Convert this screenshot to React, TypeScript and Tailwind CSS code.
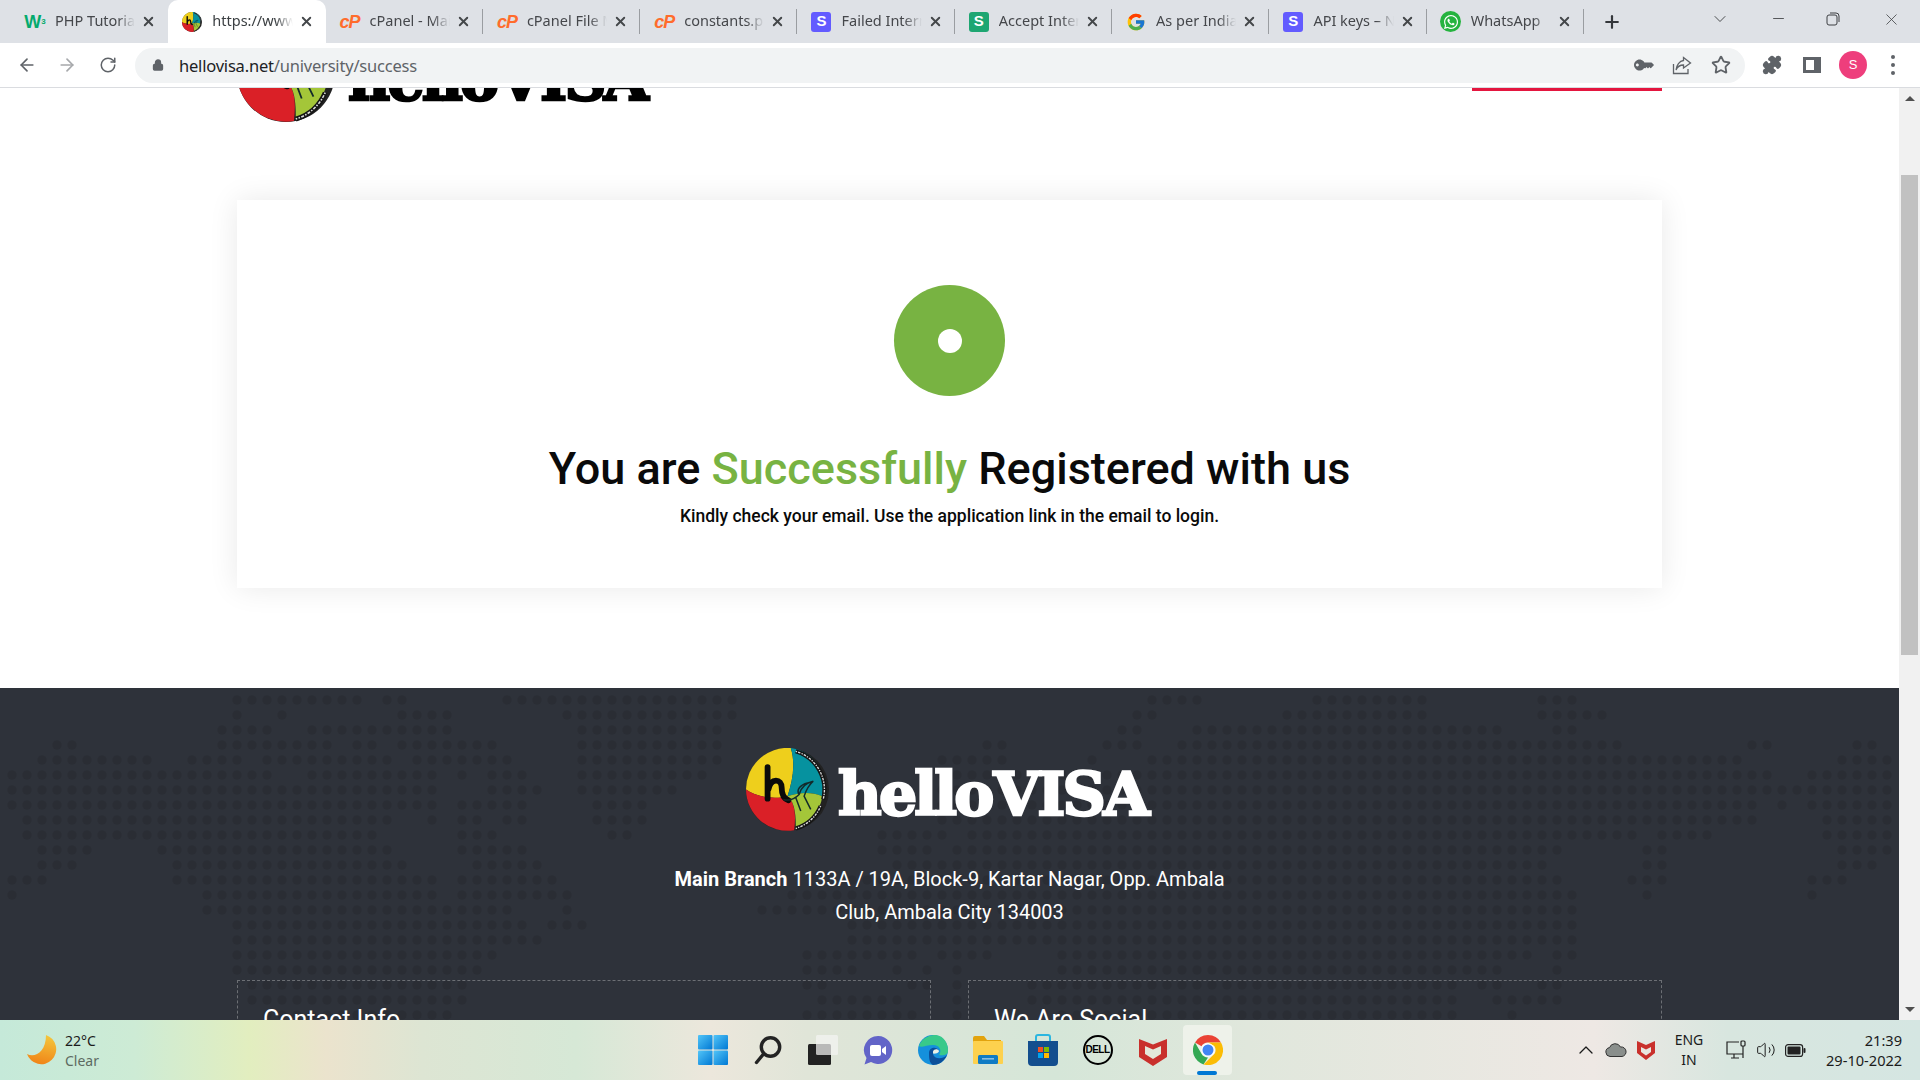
import React from "react";
import { ArrowLeft, ArrowRight, RotateCw, Lock, Star, X, Plus, ChevronDown, ChevronUp, Minus, Volume2, Puzzle } from "lucide-react";
import { FcGoogle } from "react-icons/fc";
import { FaWhatsapp, FaKey } from "react-icons/fa";

type Span = [number, number];
const rows: Span[][] = [
  [[15,23],[25,26],[33,48],[76,79],[87,94],[102,104]],
  [[15,15],[18,18],[26,29],[37,48],[75,76],[85,94],[102,106]],
  [[14,17],[20,29],[38,47],[74,75],[79,99],[103,104]],
  [[3,4],[14,21],[23,24],[26,32],[38,47],[65,66],[73,75],[78,107],[116,117],[123,124]],
  [[2,9],[12,15],[17,25],[27,33],[38,47],[62,66],[72,72],[76,115],[122,125]],
  [[0,17],[20,28],[30,30],[32,34],[38,46],[62,117],[120,125]],
  [[0,28],[32,35],[38,44],[62,119],[120,125]],
  [[0,28],[30,34],[39,42],[62,116],[118,118],[120,125]],
  [[1,25],[28,28],[30,31],[33,34],[39,42],[62,116],[121,125]],
  [[1,24],[30,32],[40,41],[58,62],[64,108],[110,113],[121,125]],
  [[2,5],[10,25],[30,34],[58,61],[63,103],[109,110],[122,125]],
  [[2,4],[11,26],[31,35],[59,102],[109,110],[122,124]],
  [[0,2],[11,28],[30,36],[56,103],[108,110],[120,122]],
  [[0,0],[13,28],[30,37],[52,104],[109,109],[120,120]],
  [[13,33],[37,37],[50,104]],
  [[15,34],[36,38],[56,104]],
  [[15,35],[56,104]],
  [[15,32],[53,60],[62,65],[70,101],[103,104]],
  [[15,31],[53,56],[59,59],[61,61],[63,63],[70,99],[103,103]],
  [[16,30],[53,54],[60,61],[63,63],[68,96],[98,99],[102,103]],
  [[16,30],[54,59],[63,63],[68,96],[99,103]],
  [[17,29],[53,60],[63,63],[70,96],[100,100]],
];

function WorldDots() {
  const dots: React.ReactElement[] = [];
  rows.forEach((spans, r) =>
    spans.forEach(([a, b]) => {
      for (let c = a; c <= b; c++) {
        dots.push(<circle key={`${r}-${c}`} cx={12 + 15 * c} cy={12 + 15 * r} r={4.5} fill="#2a2d34" />);
      }
    })
  );
  return (
    <svg className="absolute left-0 top-0 h-[340px] w-[1899px]" viewBox="0 0 1899 340">
      {dots}
    </svg>
  );
}

function LogoMark({ size }: { size: number }) {
  return (
    <svg width={size} height={size} viewBox="0 0 100 100" className="shrink-0">
      <circle cx="50" cy="50" r="50" fill="#222" />
      <path d="M0 50A50 50 0 0 1 54 0C60 20 56 40 50 58C36 62 14 60 0 50Z" fill="#eecf1c" />
      <path d="M54 0C76 3 92 20 93 40L92 58C78 52 62 54 50 58C56 40 60 20 54 0Z" fill="#06929f" />
      <path d="M0 50C14 60 36 62 50 58C60 66 60 84 58 99A50 50 0 0 1 0 50Z" fill="#da2027" />
      <path d="M50 58C62 54 78 52 92 58A49 49 0 0 1 60 97C60 84 60 66 50 58Z" fill="#a4c639" />
      <path d="M26 23V61M27 50C30 35 43 37 43 48C43 56 45 61 51 63" fill="none" stroke="#0a0a0a" strokeWidth="7" strokeLinecap="round" />
      <path d="M45 62C52 64 58 62 64 56C66 48 72 42 81 40C74 46 72 52 70 58L78 74M60 60L66 76M64 56C60 50 66 44 74 42" fill="none" stroke="#132a2a" strokeWidth="1.8" />
      <path d="M60 4A48 48 0 0 1 93 62" fill="none" stroke="#151515" strokeWidth="5" />
      <path d="M60 4A48 48 0 0 1 93 62" fill="none" stroke="#ddd" strokeWidth="1.6" strokeDasharray="1.6 1.4 3 1.4" />
      <path d="M90 70A48 48 0 0 1 60 97" fill="none" stroke="#151515" strokeWidth="5" />
      <path d="M90 70A48 48 0 0 1 60 97" fill="none" stroke="#ddd" strokeWidth="1.6" strokeDasharray="1.6 1.4 3 1.4" />
    </svg>
  );
}

function Stripe({ bg }: { bg: string }) {
  return (
    <span className={`flex h-[20px] w-[20px] items-center justify-center rounded-[3px] font-['Liberation_Sans'] text-[15px] font-bold text-white ${bg}`}>
      S
    </span>
  );
}
const CP = () => <span className="font-['Liberation_Sans'] text-[18px] font-bold italic leading-none tracking-[-1px] text-[#ff6c2c]">cP</span>;

const Whats = () => (
  <span className="flex h-[21px] w-[21px] items-center justify-center rounded-full bg-[#25b33f]">
    <FaWhatsapp size={16} className="text-white" />
  </span>
);

const tabs: { t: string; icon: React.ReactNode; active?: boolean; sep?: boolean }[] = [
  { t: "PHP Tutorial", icon: <span className="font-['Liberation_Sans'] text-[18px] font-bold leading-none text-[#04aa6d]">W<sup className="text-[8px]">3</sup></span> },
  { t: "https://www.hellovisa", active: true, icon: <LogoMark size={20} /> },
  { t: "cPanel - Main", icon: <CP /> , sep: true },
  { t: "cPanel File Manager", sep: true, icon: <CP /> },
  { t: "constants.php", sep: true, icon: <CP /> },
  { t: "Failed Internal", sep: true, icon: <Stripe bg="bg-[#635bff]" /> },
  { t: "Accept Internal", sep: true, icon: <Stripe bg="bg-[#1ea672]" /> },
  { t: "As per Indian", sep: true, icon: <FcGoogle size={20} /> },
  { t: "API keys – Next", sep: true, icon: <Stripe bg="bg-[#635bff]" /> },
  { t: "WhatsApp", sep: true, icon: <Whats /> },
];

function TabStrip() {
  return (
    <div className="flex h-[43px] items-stretch bg-[#dee1e6] pl-[11px] font-['Noto_Sans',sans-serif] text-[14.5px] text-[#45474b]">
      {tabs.map((tab) => (
        <div
          key={tab.t}
          className={`relative flex w-[157.3px] items-center pl-[13px] pr-[12px] ${tab.active ? "rounded-t-[10px] bg-white text-[#3c4043]" : ""}`}
        >
          <span className="flex w-[22px] shrink-0 justify-center">{tab.icon}</span>
          <span className="ml-[9px] min-w-0 flex-1 -translate-y-[1px] overflow-hidden whitespace-nowrap [mask-image:linear-gradient(to_right,black_78%,transparent)]">
            {tab.t}
          </span>
          <X size={15} strokeWidth={3} className="ml-[6px] shrink-0 text-[#44474a]" />
          {tab.sep && <span className="absolute right-0 top-[9px] h-[25px] w-px bg-[#9a9da1]" />}
        </div>
      ))}
      <div className="flex w-[56px] items-center justify-center">
        <Plus size={20} strokeWidth={2.6} className="text-[#34373b]" />
      </div>
      <div className="flex flex-1 items-start justify-end pt-[10px] text-[#3d3f42]">
        <ChevronDown size={20} strokeWidth={1.1} className="mr-[40px] -mt-[1px]" />
        <Minus size={17} strokeWidth={1.2} className="mr-[39px]" />
        <svg width="14" height="14" viewBox="0 0 14 14" className="mr-[42px] mt-[2px]" fill="none" stroke="#3d3f42" strokeWidth="1">
          <rect x="1" y="3" width="10" height="10" rx="2" />
          <path d="M4 1H10Q13 1 13 4V10" />
        </svg>
        <X size={19} strokeWidth={1} className="mr-[19px]" />
      </div>
    </div>
  );
}

function Toolbar() {
  return (
    <div className="flex h-[45px] items-center border-b border-[#dadce0] bg-white">
      <div className="flex w-[135px] items-center">
        <ArrowLeft size={20} strokeWidth={2} className="ml-[17px] text-[#5f6368]" />
        <ArrowRight size={20} strokeWidth={2} className="ml-[20px] text-[#a6a8ab]" />
        <RotateCw size={18} strokeWidth={2} className="ml-[22px] text-[#5f6368]" />
      </div>
      <div className="flex h-[35px] w-[1610px] items-center rounded-full bg-[#f1f3f4] pl-[17px] pr-[14px] font-['Noto_Sans',sans-serif] text-[16.5px] text-[#5f6368]">
        <Lock size={12} fill="#5f6368" strokeWidth={2.6} className="text-[#5f6368]" />
        <span className="ml-[15px] translate-y-[1px] tracking-[-0.2px]">
          <span className="text-[#202124]">hellovisa.net</span>/university/success
        </span>
        <span className="flex-1" />
        <FaKey size={16} className="mr-[21px] text-[#5f6368] [transform:rotate(-45deg)_scaleX(-1)]" />
        <svg width="20" height="20" viewBox="0 0 20 20" fill="none" stroke="#5f6368" strokeWidth="1.3" className="mr-[19px]">
          <path d="M1.5 9V18.5H16V14" />
          <path d="M11.5 2.5L18.5 8L11.5 13V10C8 10 5.5 11.5 4 15C4.5 10 7.5 6 11.5 5.5Z" />
        </svg>
        <Star size={20} strokeWidth={2.2} className="text-[#5f6368]" />
      </div>
      <Puzzle size={20} fill="#5f6368" strokeWidth={2} className="ml-[17px] text-[#5f6368]" />
      <span className="ml-[21px] flex h-[16px] w-[18px] border-[3px] border-r-[7px] border-[#5f6368] bg-white" />
      <span className="ml-[18px] flex h-[28px] w-[28px] items-center justify-center rounded-full bg-[#ee3e7c] font-['Liberation_Sans'] text-[13px] text-white">S</span>
      <span className="ml-[24px] flex flex-col gap-[4px]">
        <i className="h-[4px] w-[4px] rounded-full bg-[#5f6368]" />
        <i className="h-[4px] w-[4px] rounded-full bg-[#5f6368]" />
        <i className="h-[4px] w-[4px] rounded-full bg-[#5f6368]" />
      </span>
    </div>
  );
}

function Page() {
  return (
    <div className="min-w-0 flex-1 overflow-hidden bg-white font-['Roboto',sans-serif]">
      <div className="-mt-[64px] flex h-[176px] items-start justify-between px-[237px]">
        <div className="flex items-start">
          <LogoMark size={98} />
          <span className="ml-[13px] mt-[23px] whitespace-nowrap font-['DejaVu_Serif',serif] text-[58px] font-bold leading-[66px] tracking-[-2.7px] text-black [word-spacing:-16px] [-webkit-text-stroke:2.5px_black]">
            hello VISA
          </span>
        </div>
        <div className="h-[67px] w-[190px] border-b-[3px] border-[#e4163f]" />
      </div>

      <div className="mx-[237px] flex h-[388px] flex-col items-center bg-white pt-[85px] shadow-[0_0_28px_rgba(0,0,0,0.09)]">
        <div className="flex h-[111px] w-[111px] items-center justify-center rounded-full bg-[#78b342]">
          <div className="h-[24px] w-[24px] rounded-full bg-white" />
        </div>
        <h1 className="mt-[46px] whitespace-nowrap text-[45px] font-medium leading-[54px] text-[#0a0a0a]">
          You are <span className="text-[#78b342]">Successfully</span> Registered with us
        </h1>
        <p className="mt-[7px] whitespace-nowrap text-[17.5px] font-medium leading-[26px] text-[#0a0a0a]">
          Kindly check your email. Use the application link in the email to login.
        </p>
      </div>

      <div className="h-[100px]" />

      <div className="relative h-[340px] bg-[#2e323a]">
        <WorldDots />
        <div className="relative flex flex-col items-center pt-[60px]">
          <div className="-ml-[6px] flex items-center">
            <LogoMark size={83} />
            <span className="ml-[9px] mt-[8px] whitespace-nowrap font-['DejaVu_Serif',serif] text-[60px] font-bold leading-[66px] tracking-[-2.8px] text-white [word-spacing:-16px] [-webkit-text-stroke:2.5px_white]">
              hello VISA
            </span>
          </div>
          <p className="mt-[32px] w-[570px] text-center text-[20px] font-normal leading-[33px] text-white">
            <b className="font-bold">Main Branch</b> 1133A / 19A, Block-9, Kartar Nagar, Opp. Ambala Club, Ambala City 134003
          </p>
        </div>
        <div className="relative mt-[51px] flex gap-[37px] px-[237px]">
          <div className="h-[100px] flex-1 border border-dashed border-[#6c6f74] pl-[25px] pt-[23px] text-[25px] leading-[32px] text-white">Contact Info</div>
          <div className="h-[100px] flex-1 border border-dashed border-[#6c6f74] pl-[25px] pt-[23px] text-[25px] leading-[32px] text-white">We Are Social</div>
        </div>
      </div>
    </div>
  );
}

function Scrollbar() {
  return (
    <div className="flex w-[21px] shrink-0 flex-col items-center justify-between bg-[#f1f1f1] py-[8px]">
      <span className="h-0 w-0 border-x-[5px] border-b-[5px] border-x-transparent border-b-[#505050]" />
      <span className="h-0 w-0 border-x-[5px] border-t-[5px] border-x-transparent border-t-[#505050]" />
    </div>
  );
}

function Thumb() {
  return <div className="absolute right-0 top-[87px] h-[480px] w-[17px] -translate-x-[2px] bg-[#c1c1c1]" />;
}

const cell = "flex w-[55px] items-center justify-center";

function TaskIcons() {
  return (
    <div className="flex h-full w-[550px]">
      <div className={cell}>
        <svg width="30" height="30" viewBox="0 0 30 30">
          <defs>
            <linearGradient id="w" x1="0" y1="0" x2="1" y2="1">
              <stop offset="0" stopColor="#52c5f8" />
              <stop offset="1" stopColor="#0078d4" />
            </linearGradient>
          </defs>
          <rect x="0" y="0" width="14.5" height="14.5" rx="1" fill="url(#w)" />
          <rect x="15.5" y="0" width="14.5" height="14.5" rx="1" fill="url(#w)" />
          <rect x="0" y="15.5" width="14.5" height="14.5" rx="1" fill="url(#w)" />
          <rect x="15.5" y="15.5" width="14.5" height="14.5" rx="1" fill="url(#w)" />
        </svg>
      </div>
      <div className={cell}>
        <svg width="28" height="30" viewBox="0 0 28 30" fill="none" stroke="#232323" strokeWidth="3.4" strokeLinecap="round">
          <circle cx="16.5" cy="12" r="9.2" />
          <path d="M9.5 19L2.5 27.5" />
        </svg>
      </div>
      <div className={cell}>
        <svg width="30" height="30" viewBox="0 0 30 30">
          <rect x="0" y="9" width="23" height="21" rx="1.5" fill="#222" />
          <rect x="8" y="0" width="22" height="20" rx="1.5" fill="#f4f4f2" fillOpacity="0.72" />
        </svg>
      </div>
      <div className={cell}>
        <svg width="30" height="30" viewBox="0 0 30 30">
          <path d="M15 1A14 14 0 1 1 8 27L1.5 29.5L3.5 23A14 14 0 0 1 15 1Z" fill="#6264c8" />
          <rect x="7" y="10" width="11" height="11" rx="2" fill="#fff" />
          <path d="M19 14L23 11V20L19 17Z" fill="#fff" />
        </svg>
      </div>
      <div className={cell}>
        <svg width="30" height="30" viewBox="0 0 30 30">
          <circle cx="15" cy="15" r="15" fill="#1590dc" />
          <path d="M1 11C4 2 13 0 18 0C26 1 30 8 30 16C30 20 25 21 21 20C24 16 22 10 15 10C9 10 3 13 1 11Z" fill="#38c98a" />
          <path d="M11 18C11 12 19 11 20.5 15.5C17 14 14.5 16 15 19C16 24 24 25 29 20C26 27 20 30 15 30C11 28 11 22 11 18Z" fill="#0b4f9a" />
          <path d="M15 16.5C16 13.5 20 13.5 21 16C21 18 17 19 15 18.5Z" fill="#e8efe6" />
        </svg>
      </div>
      <div className={cell}>
        <svg width="30" height="28" viewBox="0 0 30 28">
          <path d="M0 2Q0 0 2 0H11L14 4H28V10H0Z" fill="#e2a30e" />
          <rect x="0" y="5" width="30" height="23" rx="1" fill="#fdd14e" />
          <rect x="5" y="19" width="20" height="9" rx="1.5" fill="#0f7bc4" />
          <rect x="9" y="22" width="12" height="1.6" fill="#fff" fillOpacity="0.5" />
        </svg>
      </div>
      <div className={cell}>
        <svg width="30" height="32" viewBox="0 0 30 32">
          <path d="M8 7V3Q8 1 10 1H20Q22 1 22 3V7" fill="none" stroke="#2bb6e0" strokeWidth="2" />
          <path d="M0 7H30V28Q30 32 26 32H4Q0 32 0 28Z" fill="#134e8e" />
          <rect x="10" y="13" width="5" height="5" fill="#f25022" />
          <rect x="16" y="13" width="5" height="5" fill="#7fba00" />
          <rect x="10" y="19" width="5" height="5" fill="#00a4ef" />
          <rect x="16" y="19" width="5" height="5" fill="#ffb900" />
        </svg>
      </div>
      <div className={cell}>
        <span className="flex h-[30px] w-[30px] items-center justify-center rounded-full border-[2.5px] border-black font-['Liberation_Sans'] text-[10px] font-bold tracking-[-0.5px] text-black">
          DELL
        </span>
      </div>
      <div className={cell}>
        <svg width="28" height="31" viewBox="0 0 28 31">
          <path d="M0 4L14 9.5L28 4V22L14 31L0 22Z" fill="#c9302c" />
          <path d="M6 11L14 14.5L22 11V19L14 24L6 19Z" fill="#e3e8da" />
        </svg>
      </div>
      <div className={cell}>
        <div className="relative flex h-[50px] w-[49px] items-center justify-center rounded-[4px] bg-[#eef2ea]">
          <svg width="30" height="30" viewBox="0 0 30 30">
            <path d="M15 0A15 15 0 0 1 28 7.5H15A7.5 7.5 0 0 0 8.5 11.2L2 7.5A15 15 0 0 1 15 0Z" fill="#ea4335" />
            <path d="M2 7.5L8.5 18.75A7.5 7.5 0 0 0 15 22.5L10.5 29.4A15 15 0 0 1 2 7.5Z" fill="#34a853" />
            <path d="M28 7.5A15 15 0 0 1 10.5 29.4L21.5 18.75A7.5 7.5 0 0 0 21.5 11.2L15 7.5Z" fill="#fbbc05" />
            <circle cx="15" cy="15" r="6.8" fill="#fff" />
            <circle cx="15" cy="15" r="5.5" fill="#4285f4" />
          </svg>
          <span className="absolute bottom-0 left-[14px] h-[4px] w-[20px] rounded-full bg-[#0078d4]" />
        </div>
      </div>
    </div>
  );
}

function Taskbar() {
  return (
    <div className="flex h-[60px] shrink-0 items-center bg-[linear-gradient(90deg,#c5e9d9_0%,#cdebd5_7%,#e2eebf_13%,#ebe3cd_17%,#dde5d3_22%,#d6e8d6_30%,#ece7dc_37%,#e0e5d8_42%,#d5e6d8_55%,#e0e7dc_65%,#eee8e4_83%,#d8e6df_90%,#d5e6e2_100%)] font-['Noto_Sans',sans-serif] text-[14px] leading-[20px] text-[#1b1b1b]">
      <div className="flex w-[685px] items-center pl-[27px]">
        <svg width="30" height="30" viewBox="0 0 30 30">
          <defs>
            <linearGradient id="m" x1="0.6" y1="0" x2="0.4" y2="1">
              <stop offset="0" stopColor="#f4c63c" />
              <stop offset="1" stopColor="#f08418" />
            </linearGradient>
          </defs>
          <path d="M19 0A15 15 0 1 1 0 19C8 23 19 17 19 0Z" fill="url(#m)" />
        </svg>
        <div className="ml-[8px] translate-y-[1px]">
          <div>22°C</div>
          <div className="text-[#5d6a62]">Clear</div>
        </div>
      </div>
      <TaskIcons />
      <div className="flex flex-1 items-center pl-[339px]">
        <ChevronUp size={24} strokeWidth={1.3} />
        <svg width="22" height="14" viewBox="0 0 22 14" className="ml-[7px]">
          <path d="M5 13.5A4.5 4.5 0 0 1 4.5 4.6A6 6 0 0 1 15.5 4A4.8 4.8 0 0 1 17 13.5Z" fill="#8a8f8c" stroke="#333" strokeWidth="1" />
        </svg>
        <svg width="18" height="20" viewBox="0 0 18 20" className="ml-[10px]">
          <path d="M0 1L9 5L18 1V13L9 20L0 13Z" fill="#c9302c" />
          <path d="M4 7L9 9.5L14 7V12L9 15.5L4 12Z" fill="#e8e6e0" />
        </svg>
        <div className="ml-[18px] w-[32px] text-center">
          <div>ENG</div>
          <div>IN</div>
        </div>
        <svg width="20" height="20" viewBox="0 0 20 20" fill="none" stroke="#222" strokeWidth="1.2" className="ml-[21px]">
          <path d="M13 2H1V14H17" />
          <path d="M5 18H13M8 14V18" />
          <rect x="15" y="1" width="4" height="5" rx="1" />
          <path d="M17 6V18" />
        </svg>
        <Volume2 size={20} strokeWidth={1.2} className="ml-[10px]" />
        <svg width="21" height="13" viewBox="0 0 21 13" className="ml-[9px]">
          <rect x="0.6" y="0.6" width="17" height="11.8" rx="2.5" fill="none" stroke="#222" strokeWidth="1.2" />
          <rect x="2.5" y="2.5" width="13" height="8" rx="1" fill="#222" />
          <rect x="18.5" y="4" width="2" height="5" rx="1" fill="#222" />
        </svg>
        <div className="ml-[20px] w-[76px] text-right text-[14.6px]">
          <div>21:39</div>
          <div className="whitespace-nowrap">29-10-2022</div>
        </div>
      </div>
    </div>
  );
}

export default function App() {
  return (
    <div className="flex h-screen w-screen flex-col overflow-hidden bg-white">
      <TabStrip />
      <Toolbar />
      <div className="relative flex min-h-0 flex-1">
        <Page />
        <Scrollbar />
        <Thumb />
      </div>
      <Taskbar />
    </div>
  );
}
